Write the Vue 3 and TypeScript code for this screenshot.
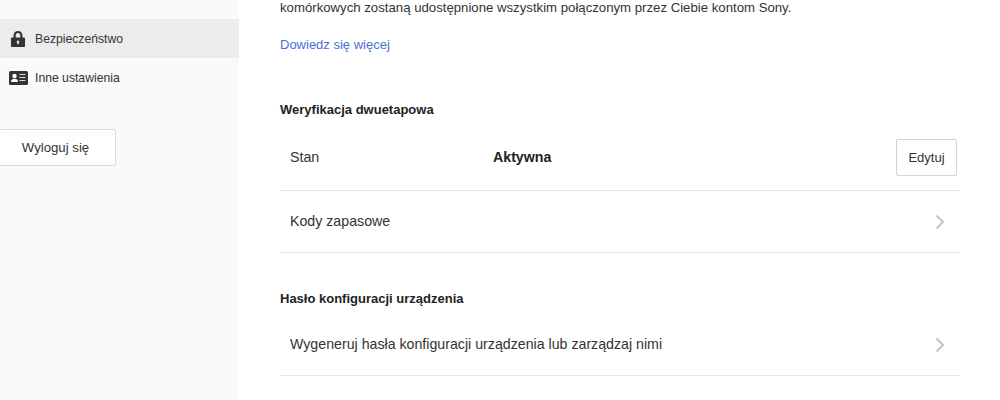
<template>
  <div class="page">
    <aside class="sidebar">
      <nav class="menu">
        <a class="menu-item active">
          <svg class="icon" width="20" height="20" viewBox="0 0 20 20">
            <path fill="#333" fill-rule="evenodd" d="M5.500 8.500V6.500C5.500 3.800 7.400 2 10 2s4.500 1.800 4.500 4.500v2h1.400c.6 0 1.100.5 1.100 1.100v7.300c0 .6-.5 1.100-1.100 1.100H4.100c-.6 0-1.100-.5-1.100-1.100V9.600c0-.6.5-1.100 1.100-1.100h1.400zm2.200 0h4.600v-2c0-1.400-.9-2.400-2.300-2.400S7.700 5.100 7.700 6.500v2zM10 11.500a1.300 1.300 0 0 0-.7 2.400v1.400h1.400v-1.400a1.300 1.300 0 0 0-.7-2.400z"/>
          </svg>
          <span>Bezpieczeństwo</span>
        </a>
        <a class="menu-item">
          <svg class="icon id-card" width="19" height="14" viewBox="0 0 19 14">
            <rect width="19" height="14" rx="1.500" fill="#333"/>
            <circle cx="5.500" cy="5" r="2.200" fill="#fff"/>
            <path fill="#fff" d="M2 11c0-2.200 1.500-3.300 3.500-3.300S9 8.800 9 11z"/>
            <path stroke="#ddd" stroke-width="1" d="M10.500 3.500h6M10.500 6.500h6M10.500 9.500h6"/>
          </svg>
          <span>Inne ustawienia</span>
        </a>
      </nav>
      <button class="logout">Wyloguj się</button>
    </aside>

    <main class="content">
      <p class="intro">komórkowych zostaną udostępnione wszystkim połączonym przez Ciebie kontom Sony.</p>
      <a class="more">Dowiedz się więcej</a>

      <section class="group first">
        <h2>Weryfikacja dwuetapowa</h2>
        <div class="row status">
          <span class="label">Stan</span>
          <strong class="value">Aktywna</strong>
          <button class="edit">Edytuj</button>
        </div>
        <div class="row link">
          <span>Kody zapasowe</span>
          <svg class="chevron" width="10" height="16" viewBox="0 0 10 16">
            <path d="M1.500 1.500 8 8l-6.500 6.500" fill="none" stroke="#c4c4c4" stroke-width="2"/>
          </svg>
        </div>
      </section>

      <section class="group last">
        <h2>Hasło konfiguracji urządzenia</h2>
        <div class="row link">
          <span>Wygeneruj hasła konfiguracji urządzenia lub zarządzaj nimi</span>
          <svg class="chevron" width="10" height="16" viewBox="0 0 10 16">
            <path d="M1.500 1.500 8 8l-6.500 6.500" fill="none" stroke="#c4c4c4" stroke-width="2"/>
          </svg>
        </div>
      </section>
    </main>
  </div>
</template>

<script setup lang="ts">
</script>

<style>
html, body {
  margin: 0;
  background: #fff;
  overflow: hidden;
}
</style>

<style scoped>
.page {
  display: flex;
  width: 1000px;
  height: 400px;
  overflow: hidden;
  font-family: "Liberation Sans", Arial, sans-serif;
  color: #333;
}

.sidebar {
  width: 239px;
  flex-shrink: 0;
  background: #fafafa;
  padding-top: 19px;
  box-sizing: border-box;
}

.menu-item {
  display: flex;
  align-items: center;
  height: 39px;
  padding-left: 8px;
  gap: 7px;
  font-size: 12.2px;
}

.menu-item.active {
  background: #ececec;
}

.icon {
  flex-shrink: 0;
}

.id-card {
  margin-left: 1px;
}

.logout {
  display: block;
  width: 117px;
  height: 37px;
  margin: 32px 0 0 -1px;
  padding: 0 4px 0 0;
  background: #fff;
  border: 1px solid #dcdcdc;
  border-radius: 2px;
  font: 13.2px "Liberation Sans", Arial, sans-serif;
  color: #333;
}

.content {
  width: 680px;
  margin-left: 41px;
}

.intro {
  margin: 0;
  font-size: 13.2px;
  line-height: 15px;
}

.more {
  display: block;
  margin-top: 22px;
  font-size: 13px;
  line-height: 15px;
  color: #4a6fd8;
}

.group {
  margin-top: 38px;
}

.group.first {
  margin-top: 50px;
}

h2 {
  margin: 0 0 7px;
  font-size: 13px;
  line-height: 15px;
  font-weight: 700;
  color: #222;
}

.row {
  display: flex;
  align-items: center;
  padding: 0 10px;
  border-bottom: 1px solid #e8e8e8;
  font-size: 14.200px;
}

.status {
  height: 66px;
}

.label {
  width: 203px;
}

.value {
  flex: 1;
  color: #222;
}

.edit {
  width: 61px;
  height: 37px;
  margin-right: -7px;
  background: #fff;
  border: 1px solid #d4d4d4;
  border-radius: 2px;
  font: 13px "Liberation Sans", Arial, sans-serif;
  color: #333;
}

.link {
  height: 59px;
  padding-bottom: 2px;
  justify-content: space-between;
}

.last .link {
  margin-top: 8px;
}

.chevron {
  margin: 2px 5px 0 0;
}
</style>
